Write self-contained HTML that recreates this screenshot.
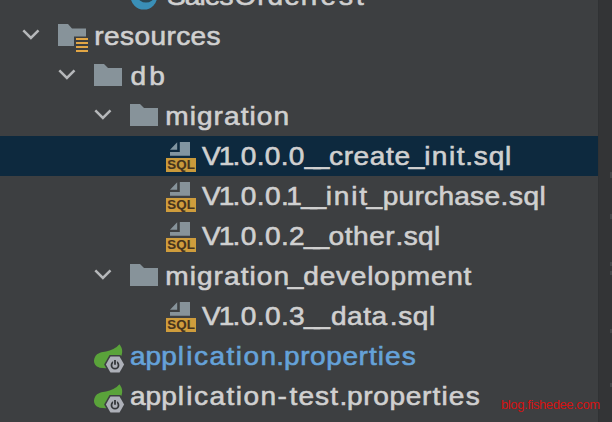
<!DOCTYPE html>
<html><head><meta charset="utf-8">
<style>
html,body{margin:0;padding:0;}
body{width:612px;height:422px;overflow:hidden;background:#3d3f41;position:relative;font-family:"Liberation Sans",sans-serif;}
.row{position:absolute;left:0;width:598px;height:40px;}
.sel{background:#0d293e;}
#tx{left:0;top:0;pointer-events:none;}
#tx text{font-family:"Liberation Sans",sans-serif;font-size:26.5px;fill:#d0d0d0;stroke:#d0d0d0;stroke-width:0.6px;}
#tx text.blue{fill:#65a2d9;stroke:#65a2d9;}
.mk{position:absolute;left:610px;width:2px;background:#434648;}
.side{position:absolute;left:598px;top:0;width:14px;height:422px;background:#333436;border-left:1.5px solid #303234;box-sizing:border-box;}
svg{position:absolute;overflow:visible;}
.wm{position:absolute;left:501px;top:395px;font-size:13px;color:#d41212;letter-spacing:-0.4px;line-height:20px;white-space:nowrap;}
</style></head><body>
<div class="side"></div>
<div class="mk" style="top:172px;height:6px"></div>
<div class="mk" style="top:214px;height:5px"></div>
<div class="mk" style="top:262px;height:4px"></div>
<div class="mk" style="top:271px;height:4px"></div>
<div class="mk" style="top:329px;height:4px"></div>
<div class="mk" style="top:383px;height:4px"></div>

<div class="row" style="top:-24px">
  <svg style="left:130px;top:0" width="32" height="40"><circle cx="13.9" cy="20.3" r="13.3" fill="#3a8fb7"/><ellipse cx="16" cy="20.3" rx="8" ry="6.3" fill="#2b4652"/></svg>
</div>

<div class="row" style="top:16px">
  <svg style="left:22px;top:0" width="20" height="40"><path d="M1.3 14.3 L8.9 21.9 L16.5 14.3" fill="none" stroke="#b6b8ba" stroke-width="2.5"/></svg>
  <svg style="left:58px;top:0" width="32" height="40"><path d="M0 8 H10 L14 12.5 H28 V20.5 H16 V30 H0 Z" fill="#87939a"/><path d="M18 23 H30 M18 27 H30 M18 31 H30 M18 35 H30" stroke="#e2a645" stroke-width="2"/></svg>
</div>

<div class="row" style="top:56px">
  <svg style="left:58px;top:0" width="20" height="40"><path d="M1.3 14.3 L8.9 21.9 L16.5 14.3" fill="none" stroke="#b6b8ba" stroke-width="2.5"/></svg>
  <svg style="left:94px;top:0" width="32" height="40"><path d="M0 8 H10 L14 12 H28 V30 H0 Z" fill="#87939a"/></svg>
</div>

<div class="row" style="top:96px">
  <svg style="left:94px;top:0" width="20" height="40"><path d="M1.3 14.3 L8.9 21.9 L16.5 14.3" fill="none" stroke="#b6b8ba" stroke-width="2.5"/></svg>
  <svg style="left:130px;top:0" width="32" height="40"><path d="M0 8 H10 L14 12 H28 V30 H0 Z" fill="#87939a"/></svg>
</div>

<div class="row sel" style="top:136px">
  <svg style="left:166px;top:0" width="32" height="40"><path d="M13.8 6 H24 V19.7 H4 V15.9 H13.8 Z" fill="#8195a1"/><path d="M4 13.8 H11.2 V6.3 Z" fill="#8195a1"/><rect x="0" y="22" width="30" height="14" fill="#c99a3b"/><text x="15.2" y="33.1" font-size="13.3" font-weight="bold" fill="#46341e" stroke="#46341e" stroke-width="0.15" text-anchor="middle" letter-spacing="0.2" font-family="Liberation Sans, sans-serif">SQL</text></svg>
</div>

<div class="row" style="top:176px">
  <svg style="left:166px;top:0" width="32" height="40"><path d="M13.8 6 H24 V19.7 H4 V15.9 H13.8 Z" fill="#87939a"/><path d="M4 13.8 H11.2 V6.3 Z" fill="#87939a"/><rect x="0" y="22" width="30" height="14" fill="#cf9d3c"/><text x="15.2" y="33.1" font-size="13.3" font-weight="bold" fill="#46341e" stroke="#46341e" stroke-width="0.15" text-anchor="middle" letter-spacing="0.2" font-family="Liberation Sans, sans-serif">SQL</text></svg>
</div>

<div class="row" style="top:216px">
  <svg style="left:166px;top:0" width="32" height="40"><path d="M13.8 6 H24 V19.7 H4 V15.9 H13.8 Z" fill="#87939a"/><path d="M4 13.8 H11.2 V6.3 Z" fill="#87939a"/><rect x="0" y="22" width="30" height="14" fill="#cf9d3c"/><text x="15.2" y="33.1" font-size="13.3" font-weight="bold" fill="#46341e" stroke="#46341e" stroke-width="0.15" text-anchor="middle" letter-spacing="0.2" font-family="Liberation Sans, sans-serif">SQL</text></svg>
</div>

<div class="row" style="top:256px">
  <svg style="left:94px;top:0" width="20" height="40"><path d="M1.3 14.3 L8.9 21.9 L16.5 14.3" fill="none" stroke="#b6b8ba" stroke-width="2.5"/></svg>
  <svg style="left:130px;top:0" width="32" height="40"><path d="M0 8 H10 L14 12 H28 V30 H0 Z" fill="#87939a"/></svg>
</div>

<div class="row" style="top:296px">
  <svg style="left:166px;top:0" width="32" height="40"><path d="M13.8 6 H24 V19.7 H4 V15.9 H13.8 Z" fill="#87939a"/><path d="M4 13.8 H11.2 V6.3 Z" fill="#87939a"/><rect x="0" y="22" width="30" height="14" fill="#cf9d3c"/><text x="15.2" y="33.1" font-size="13.3" font-weight="bold" fill="#46341e" stroke="#46341e" stroke-width="0.15" text-anchor="middle" letter-spacing="0.2" font-family="Liberation Sans, sans-serif">SQL</text></svg>
</div>

<div class="row" style="top:336px">
  <svg style="left:94px;top:0" width="32" height="40"><path d="M25.5 8.3 C27 10.5 28.5 13 28.2 16 C28 19 27 21 25 23 L12 32.2 L5.7 31.7 C3.5 31 2 30 1 28.5 C-0.5 26 -0.3 23 1.5 20 C3.5 17 8 16 12 15.5 C17 14.5 22 12.5 25.5 8.3 Z" fill="#5aa33a"/><path d="M15.55 19.00 H26.45 L31.90 28.50 L26.45 38.00 H15.55 L10.10 28.50 Z" fill="#3d3f41"/><path d="M16.45 20.60 H25.55 L30.10 28.50 L25.55 36.40 H16.45 L11.90 28.50 Z" fill="#adb0b8"/><circle cx="21" cy="29.2" r="3.5" fill="none" stroke="#34373a" stroke-width="1.8"/><path d="M21 23.6 V28.6" stroke="#adb0b8" stroke-width="3.8"/><path d="M21 24 V28.8" stroke="#34373a" stroke-width="1.8"/></svg>
</div>

<div class="row" style="top:376px">
  <svg style="left:94px;top:0" width="32" height="40"><path d="M25.5 8.3 C27 10.5 28.5 13 28.2 16 C28 19 27 21 25 23 L12 32.2 L5.7 31.7 C3.5 31 2 30 1 28.5 C-0.5 26 -0.3 23 1.5 20 C3.5 17 8 16 12 15.5 C17 14.5 22 12.5 25.5 8.3 Z" fill="#5aa33a"/><path d="M15.55 19.00 H26.45 L31.90 28.50 L26.45 38.00 H15.55 L10.10 28.50 Z" fill="#3d3f41"/><path d="M16.45 20.60 H25.55 L30.10 28.50 L25.55 36.40 H16.45 L11.90 28.50 Z" fill="#adb0b8"/><circle cx="21" cy="29.2" r="3.5" fill="none" stroke="#34373a" stroke-width="1.8"/><path d="M21 23.6 V28.6" stroke="#adb0b8" stroke-width="3.8"/><path d="M21 24 V28.8" stroke="#34373a" stroke-width="1.8"/></svg>
</div>

<svg id="tx" width="612" height="422"><g transform="scale(1.06,1)">
<text x="157.47 174.30 188.18 193.22 207.11 221.12 242.66 252.42 268.09 283.76 288.15 302.29 319.86 335.94" y="5.2">SalesOrderTest</text>
<text x="88.91 98.10 113.20 126.82 141.92 157.03 166.22 179.83 194.94" y="45.2">resources</text>
<text x="123.13 140.77" y="85.2">db</text>
<text x="155.89 178.94 185.81 201.53 211.33 227.05 235.39 242.26 257.98" y="125.2">migration</text>
<text x="190.63 206.30 219.44 227.09 242.11 249.76 264.78 272.43 287.45 295.92 310.40 324.20 333.58 348.88 364.17 372.09 385.56 400.14 407.42 423.56 430.85 438.97 447.03 460.98 476.43" y="165.2 165.2 165.2 165.2 165.2 165.2 165.2 165.2 163.7 163.7 165.2 165.2 165.2 165.2 165.2 165.2 163.7 165.2 165.2 165.2 165.2 165.2 165.2 165.2 165.2">V1.0.0.0__create_init.sql</text>
<text x="190.63 206.30 219.44 227.15 242.24 249.95 265.03 269.98 284.25 293.00 307.40 314.97 331.39 338.96 345.79 361.08 376.05 391.02 400.08 413.57 428.54 443.51 457.00 472.27 480.11 493.85 509.07" y="205.2 205.2 205.2 205.2 205.2 205.2 205.2 205.2 203.7 203.7 205.2 205.2 205.2 205.2 203.7 205.2 205.2 205.2 205.2 205.2 205.2 205.2 205.2 205.2 205.2 205.2 205.2">V1.0.0.1__init_purchase.sql</text>
<text x="190.63 206.30 219.44 227.15 242.24 249.95 265.04 272.75 286.70 295.83 310.02 325.25 333.11 348.34 363.57 373.12 380.84 394.44 409.54" y="245.2 245.2 245.2 245.2 245.2 245.2 245.2 245.2 243.7 243.7 245.2 245.2 245.2 245.2 245.2 245.2 245.2 245.2 245.2">V1.0.0.2__other.sql</text>
<text x="155.89 178.94 185.81 201.53 211.33 227.05 235.39 242.26 257.98 271.36 286.15 301.57 316.99 330.93 346.35 352.92 368.34 383.76 406.52 421.94 437.36" y="285.2 285.2 285.2 285.2 285.2 285.2 285.2 285.2 285.2 283.7 285.2 285.2 285.2 285.2 285.2 285.2 285.2 285.2 285.2 285.2 285.2">migration_development</text>
<text x="190.63 206.30 219.44 227.15 242.24 249.95 265.04 272.75 286.70 296.58 312.19 327.41 342.63 350.47 367.74 375.62 389.38 404.63" y="325.2 325.2 325.2 325.2 325.2 325.2 325.2 325.2 323.7 323.7 325.2 325.2 325.2 325.2 325.2 325.2 325.2 325.2">V1.0.0.3__data.sql</text>
<text class="blue" x="122.57 137.38 152.18 167.68 175.77 183.04 197.65 213.74 222.46 229.71 245.81 260.54 267.97 283.21 292.54 307.79 323.03 338.16 348.01 356.40 363.32 379.09" y="365.2">application.properties</text>
<text x="122.57 137.38 152.18 167.68 175.77 183.04 197.65 213.74 222.46 229.71 245.81 261.69 273.21 281.55 297.28 311.51 320.30 327.40 342.72 352.12 367.44 382.75 398.16 408.06 416.50 423.46 439.28" y="405.2">application-test.properties</text>
</g></svg>
<div class="wm">blog.fishedee.com</div>
</body></html>
